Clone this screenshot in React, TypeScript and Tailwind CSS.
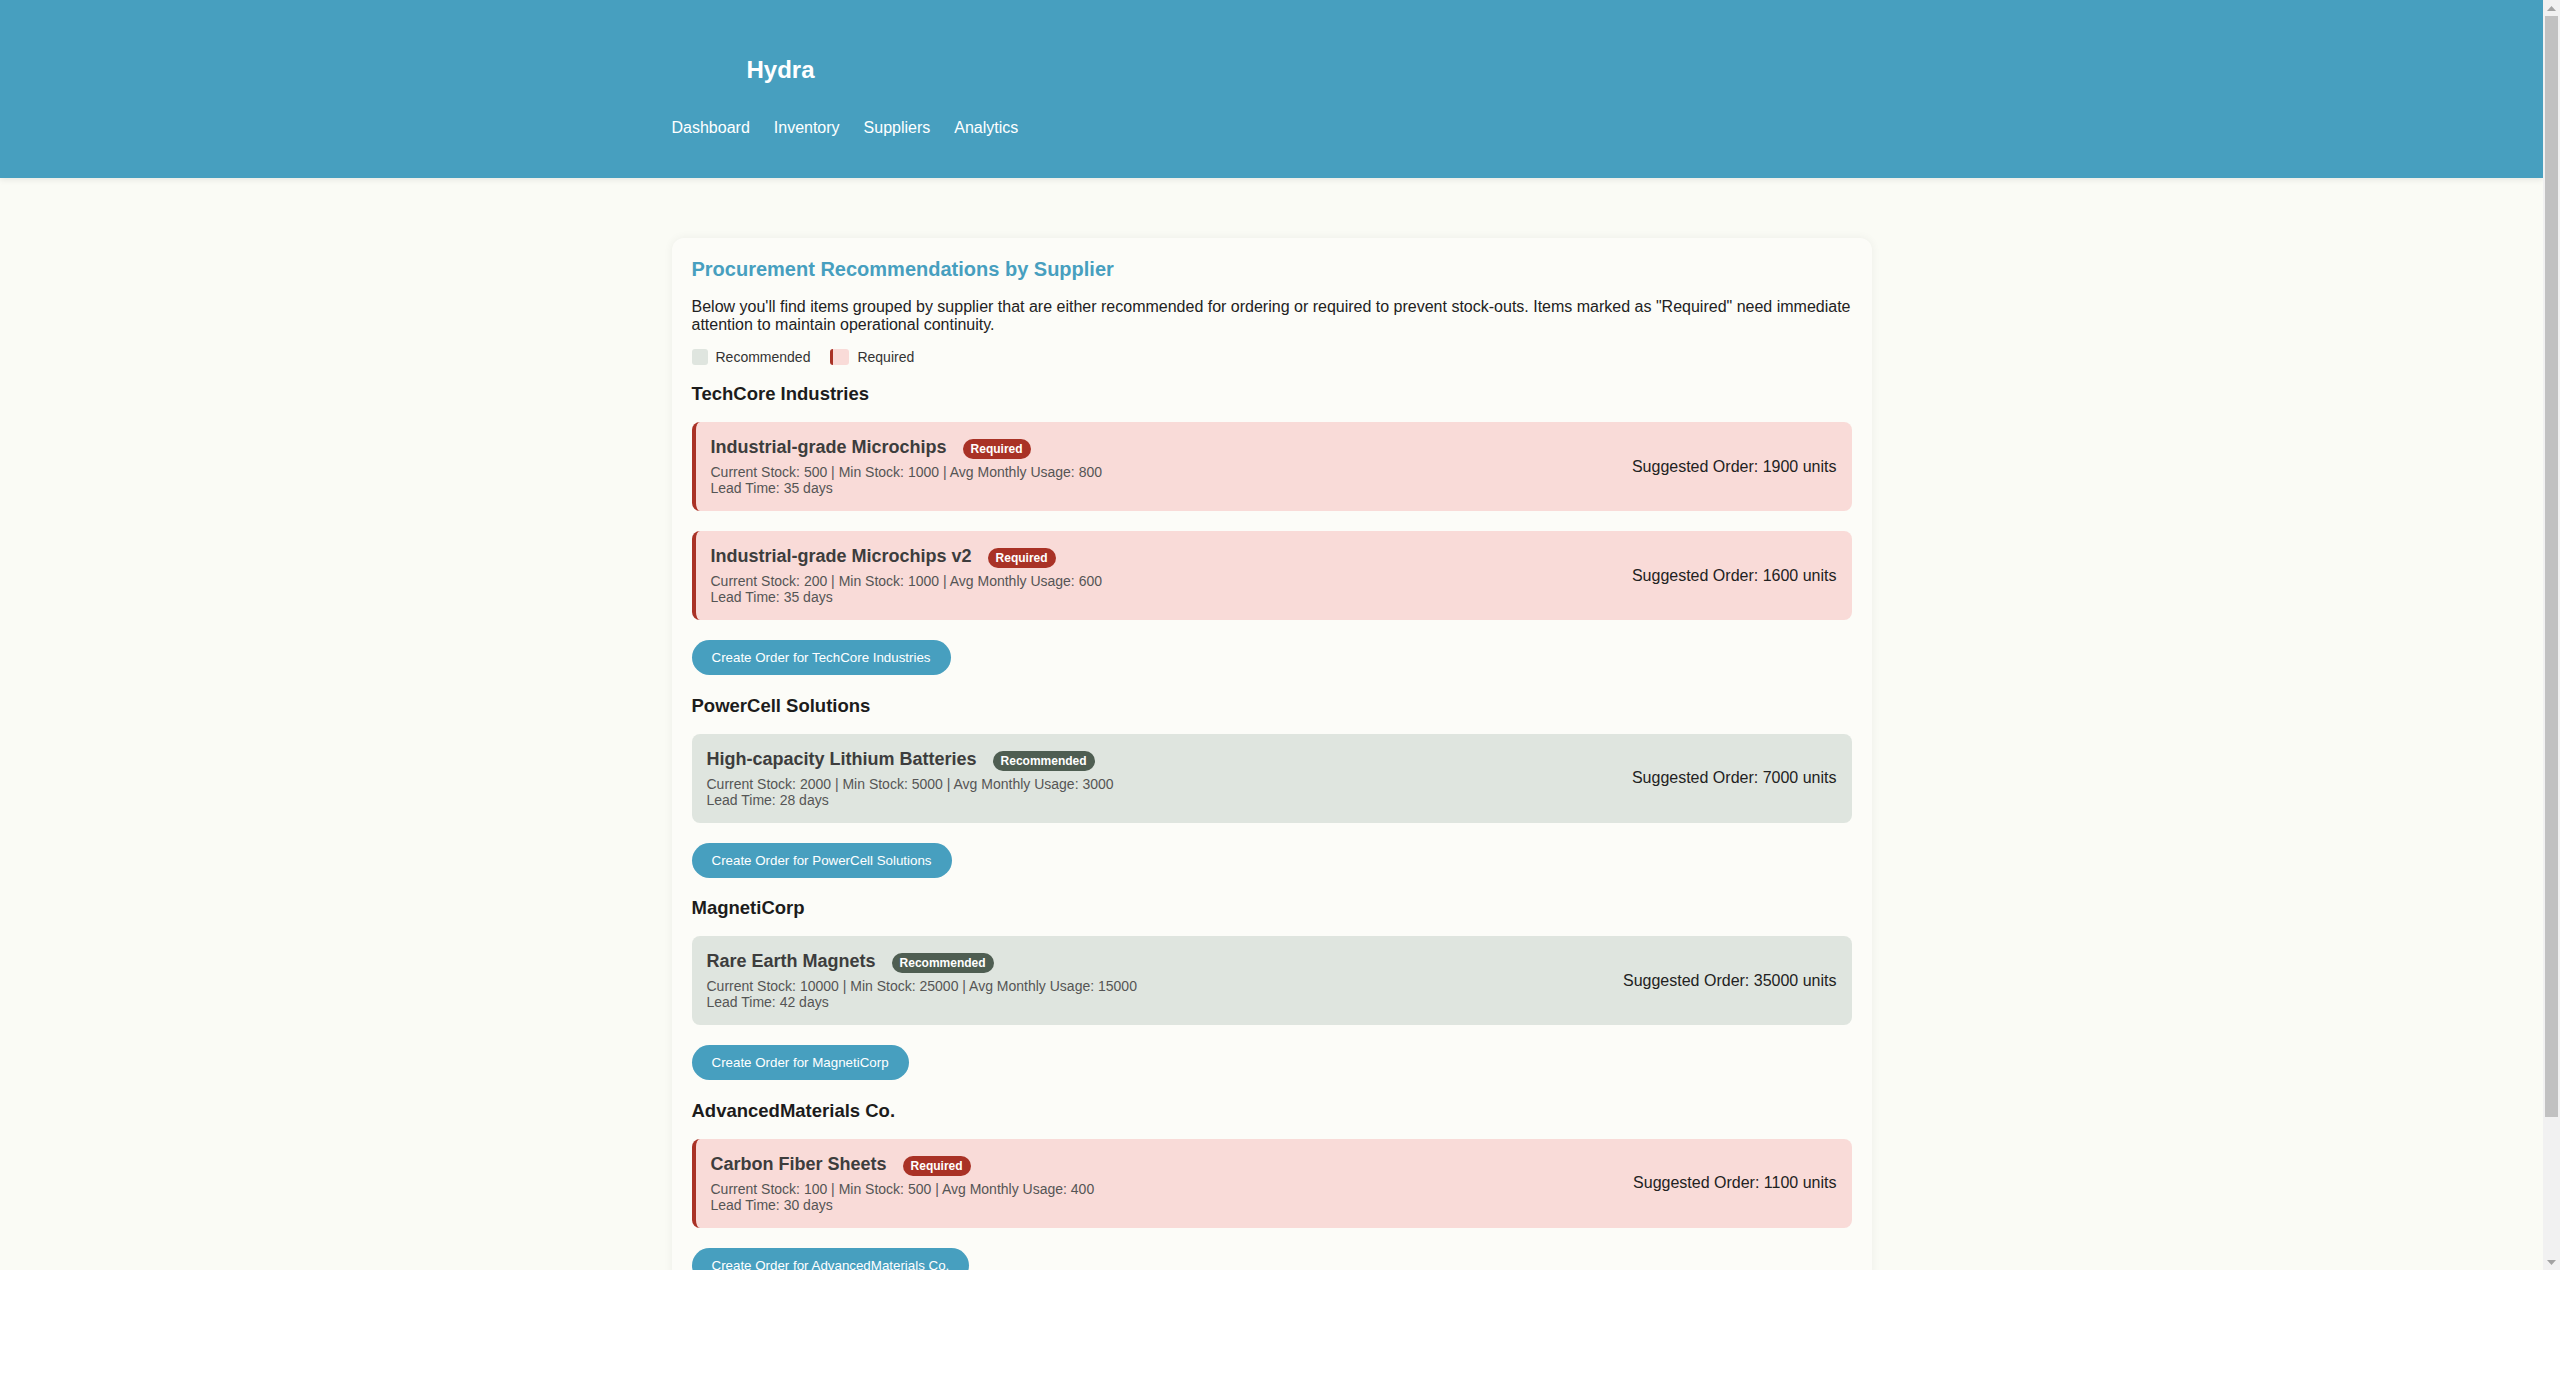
import React from 'react';

type Level = 'required' | 'recommended';

type Item = {
  name: string;
  level: Level;
  current: number;
  min: number;
  usage: number;
  lead: number;
  order: number;
};

type Supplier = { name: string; items: Item[] };

const suppliers: Supplier[] = [
  {
    name: 'TechCore Industries',
    items: [
      { name: 'Industrial-grade Microchips', level: 'required', current: 500, min: 1000, usage: 800, lead: 35, order: 1900 },
      { name: 'Industrial-grade Microchips v2', level: 'required', current: 200, min: 1000, usage: 600, lead: 35, order: 1600 },
    ],
  },
  {
    name: 'PowerCell Solutions',
    items: [
      { name: 'High-capacity Lithium Batteries', level: 'recommended', current: 2000, min: 5000, usage: 3000, lead: 28, order: 7000 },
    ],
  },
  {
    name: 'MagnetiCorp',
    items: [
      { name: 'Rare Earth Magnets', level: 'recommended', current: 10000, min: 25000, usage: 15000, lead: 42, order: 35000 },
    ],
  },
  {
    name: 'AdvancedMaterials Co.',
    items: [
      { name: 'Carbon Fiber Sheets', level: 'required', current: 100, min: 500, usage: 400, lead: 30, order: 1100 },
    ],
  },
];

const navLinks = ['Dashboard', 'Inventory', 'Suppliers', 'Analytics'];

const Header: React.FC = () => {
  return (
    <header className="bg-[#479fbf] text-white pt-[56px] pb-[41px] shadow-[0_2px_6px_rgba(0,0,0,0.08)] relative z-10">
      <div className="max-w-[1200px] mx-auto">
        <div className="flex items-center">
          {/* logo slot, image never loaded */}
          <div className="w-[60px] h-[26px] mr-[15px]" />
          <h1 className="text-[24px] font-bold leading-[normal]">Hydra</h1>
        </div>
        <nav className="flex gap-6 mt-[35px] text-[16px]">
          {navLinks.map((l) => (
            <a key={l} href="#" className="text-white">
              {l}
            </a>
          ))}
        </nav>
      </div>
    </header>
  );
};

const ItemCard: React.FC<{ item: Item }> = ({ item }) => {
  const required = item.level === 'required';
  return (
    <div
      className={
        required
          ? 'flex items-center justify-between rounded-[8px] p-[15px] bg-[#f9dbd8] border-l-4 border-[#a93226]'
          : 'flex items-center justify-between rounded-[8px] p-[15px] bg-[#dfe5df]'
      }
    >
      <div>
        <div className="flex items-baseline mb-[5px]">
          <span className="text-[18px] font-bold text-[#3d3d3d]">{item.name}</span>
          <span
            className={
              required
                ? 'ml-4 rounded-full px-2 py-[3px] text-[12px] font-bold text-white bg-[#a93226]'
                : 'ml-4 rounded-full px-2 py-[3px] text-[12px] font-bold text-white bg-[#4f5e52]'
            }
          >
            {required ? 'Required' : 'Recommended'}
          </span>
        </div>
        <div className="text-[14px] text-[#555]">
          Current Stock: {item.current} | Min Stock: {item.min} | Avg Monthly Usage: {item.usage}
        </div>
        <div className="text-[14px] text-[#555]">Lead Time: {item.lead} days</div>
      </div>
      <div className="text-[16px] text-[#222]">Suggested Order: {item.order} units</div>
    </div>
  );
};

const SupplierSection: React.FC<{ supplier: Supplier }> = ({ supplier }) => {
  return (
    <section>
      <h3 className="text-[18.5px] font-bold text-[#1c1c1c] mb-[17px]">{supplier.name}</h3>
      <div className="flex flex-col gap-5">
        {supplier.items.map((it) => (
          <ItemCard key={it.name} item={it} />
        ))}
      </div>
      <button className="mt-5 rounded-full bg-[#479fbf] text-white text-[13.333px] px-5 py-[10px]">
        Create Order for {supplier.name}
      </button>
    </section>
  );
};

// window scrollbar as it shows in the capture
const Scrollbar: React.FC = () => {
  return (
    <div className="w-[17px] shrink-0 bg-[#f1f1f1] flex flex-col">
      <div className="h-[16px] flex items-center justify-center">
        <svg width="9" height="5" viewBox="0 0 9 5">
          <path d="M0 5 L4.5 0 L9 5 Z" fill="#a3a3a3" />
        </svg>
      </div>
      <div className="flex-1 px-[2px]">
        <div className="h-[1101px] bg-[#c1c1c1]" />
      </div>
      <div className="h-[16px] flex items-center justify-center">
        <svg width="9" height="5" viewBox="0 0 9 5">
          <path d="M0 0 L4.5 5 L9 0 Z" fill="#a3a3a3" />
        </svg>
      </div>
    </div>
  );
};

export default function App() {
  return (
    <div className="bg-white min-h-[1387px] font-['Liberation_Sans',Arial,sans-serif] leading-[normal]">
      <div className="h-[1270px] flex">
        <div className="flex-1 overflow-hidden bg-[#fafbf5]">
          <Header />
          <main className="pt-[60px] pb-[124px]">
            <div className="max-w-[1200px] mx-auto bg-[#fcfcf8] rounded-[12px] p-5 shadow-[0_0_10px_rgba(0,0,0,0.06)]">
              <h2 className="text-[20px] font-bold text-[#479fbf] mb-[17px]">
                Procurement Recommendations by Supplier
              </h2>
              <p className="text-[16px] text-[#222] mb-[15px]">
                Below you'll find items grouped by supplier that are either recommended for ordering or required to
                prevent stock-outs. Items marked as "Required" need immediate attention to maintain operational
                continuity.
              </p>
              <div className="flex items-center gap-5 text-[14px] text-[#333] mb-[18px]">
                <div className="flex items-center gap-2">
                  <span className="w-4 h-4 rounded-[3px] bg-[#dfe5df]" />
                  <span>Recommended</span>
                </div>
                <div className="flex items-center gap-2">
                  <span className="w-[19px] h-4 rounded-[3px] bg-[#f9dbd8] border-l-[3px] border-[#a93226]" />
                  <span>Required</span>
                </div>
              </div>
              <div className="flex flex-col gap-[19.5px]">
                {suppliers.map((s) => (
                  <SupplierSection key={s.name} supplier={s} />
                ))}
              </div>
            </div>
          </main>
        </div>
        <Scrollbar />
      </div>
    </div>
  );
}
